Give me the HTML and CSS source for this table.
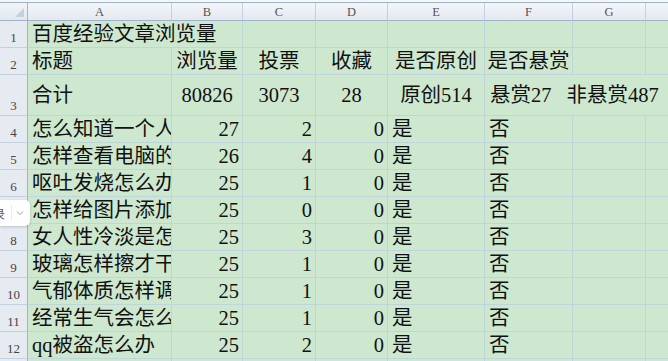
FILE: index.html
```html
<!DOCTYPE html>
<html lang="zh-CN">
<head>
<meta charset="utf-8">
<title>百度经验文章浏览量</title>
<link rel="stylesheet" href="styles.css">
</head>
<body>
<div class="sheet">
  <div class="grid">
    <div class="corner"><span class="tri"></span></div>
    <div class="ch">A</div><div class="ch">B</div><div class="ch">C</div><div class="ch">D</div><div class="ch">E</div><div class="ch">F</div><div class="ch">G</div><div class="ch last"></div>

    <div class="rh">1</div>
    <div class="c l span2">百度经验文章浏览量</div><div class="c"></div><div class="c"></div><div class="c"></div><div class="c"></div><div class="c"></div><div class="c last"></div>

    <div class="rh">2</div>
    <div class="c l">标题</div><div class="c m">浏览量</div><div class="c m">投票</div><div class="c m">收藏</div><div class="c m">是否原创</div><div class="c m">是否悬赏</div><div class="c"></div><div class="c last"></div>

    <div class="rh">3</div>
    <div class="c l mid">合计</div><div class="c m mid">80826</div><div class="c m mid">3073</div><div class="c m mid">28</div><div class="c m mid">原创514</div>
    <div class="c l mid span3 pair"><span>悬赏27</span><span>非悬赏487</span></div>

    <div class="rh">4</div>
    <div class="c l clip">怎么知道一个人</div><div class="c r">27</div><div class="c r">2</div><div class="c r">0</div><div class="c l">是</div><div class="c l">否</div><div class="c"></div><div class="c last"></div>

    <div class="rh">5</div>
    <div class="c l clip">怎样查看电脑的</div><div class="c r">26</div><div class="c r">4</div><div class="c r">0</div><div class="c l">是</div><div class="c l">否</div><div class="c"></div><div class="c last"></div>

    <div class="rh">6</div>
    <div class="c l clip">呕吐发烧怎么办</div><div class="c r">25</div><div class="c r">1</div><div class="c r">0</div><div class="c l">是</div><div class="c l">否</div><div class="c"></div><div class="c last"></div>

    <div class="rh">7</div>
    <div class="c l clip">怎样给图片添加</div><div class="c r">25</div><div class="c r">0</div><div class="c r">0</div><div class="c l">是</div><div class="c l">否</div><div class="c"></div><div class="c last"></div>

    <div class="rh">8</div>
    <div class="c l clip">女人性冷淡是怎</div><div class="c r">25</div><div class="c r">3</div><div class="c r">0</div><div class="c l">是</div><div class="c l">否</div><div class="c"></div><div class="c last"></div>

    <div class="rh">9</div>
    <div class="c l clip">玻璃怎样擦才干</div><div class="c r">25</div><div class="c r">1</div><div class="c r">0</div><div class="c l">是</div><div class="c l">否</div><div class="c"></div><div class="c last"></div>

    <div class="rh">10</div>
    <div class="c l clip">气郁体质怎样调</div><div class="c r">25</div><div class="c r">1</div><div class="c r">0</div><div class="c l">是</div><div class="c l">否</div><div class="c"></div><div class="c last"></div>

    <div class="rh">11</div>
    <div class="c l clip">经常生气会怎么</div><div class="c r">25</div><div class="c r">1</div><div class="c r">0</div><div class="c l">是</div><div class="c l">否</div><div class="c"></div><div class="c last"></div>

    <div class="rh">12</div>
    <div class="c l clip">qq被盗怎么办</div><div class="c r">25</div><div class="c r">2</div><div class="c r">0</div><div class="c l">是</div><div class="c l">否</div><div class="c"></div><div class="c last"></div>

    <div class="rh">13</div>
    <div class="c"></div><div class="c"></div><div class="c"></div><div class="c"></div><div class="c"></div><div class="c"></div><div class="c"></div><div class="c last"></div>
  </div>
  <div class="float"><span class="fl-txt">录</span><span class="fl-sep"></span><svg class="fl-chev" width="8" height="6" viewBox="0 0 8 6"><path d="M1 1.5 L4 4.5 L7 1.5" fill="none" stroke="#9a9a9a" stroke-width="1"/></svg></div>
</div>
</body>
</html>
```

FILE: styles.css
```css
html, body {
  margin: 0;
  padding: 0;
  background: #f4f5f7;
  overflow: hidden;
}

.sheet {
  position: relative;
  width: 668px;
  height: 361px;
  padding-top: 2px;
  box-sizing: border-box;
  overflow: hidden;
}

.grid {
  display: grid;
  grid-template-columns: 28px 144px 71px 73px 72px 97px 88px 73px 1fr;
  grid-template-rows: 18px 27px 27px 41px repeat(9, 27px) 27px;
  border-top: 1px solid #9fb4cb;
  font-family: "Liberation Serif", "Noto Sans CJK SC", serif;
  font-size: 20.5px;
  color: #111;
}

.corner {
  position: relative;
  background: linear-gradient(#f1f4f8, #e2e8ef);
  border-right: 1px solid #9fb4cb;
  border-bottom: 1px solid #9fb4cb;
}
.corner .tri {
  position: absolute;
  right: 3px;
  bottom: 3px;
  width: 0;
  height: 0;
  border-left: 9px solid transparent;
  border-bottom: 9px solid #c4d0de;
}

.ch {
  display: flex;
  align-items: center;
  justify-content: center;
  background: linear-gradient(#f3f6f9, #e4e9f0);
  border-right: 1px solid #c3d0de;
  border-bottom: 1px solid #9fb4cb;
  font-family: "Liberation Serif", serif;
  font-size: 12.5px;
  color: #555;
  padding-top: 1px;
}
.ch.last { border-right: none; }

.rh {
  display: flex;
  align-items: flex-end;
  justify-content: center;
  background: #e6ebf1;
  border-right: 1px solid #9fb4cb;
  border-bottom: 1px solid #c3d0de;
  font-family: "Liberation Serif", serif;
  font-size: 13px;
  color: #444;
  padding-bottom: 1px;
  box-sizing: border-box;
}

.c {
  display: flex;
  align-items: flex-end;
  background: #cde8cf;
  border-right: 1px solid #bfd5dc;
  border-bottom: 1px solid #bfd5dc;
  padding: 0 3px 1px 4px;
  line-height: 24px;
  white-space: nowrap;
  box-sizing: border-box;
  min-width: 0;
}
.c.last { border-right: none; }
.c.l { justify-content: flex-start; }
.c.m { justify-content: center; padding: 0 0 1px 0; }
.c.r { justify-content: flex-end; padding-right: 3px; }
.c.mid { align-items: center; padding-bottom: 0; }
.c.clip { overflow: hidden; padding-right: 0; }
.span2 { grid-column: span 2; }
.span3 { grid-column: span 3; border-right: none; }
.pair { gap: 15px; padding-left: 5px; }

.float {
  position: absolute;
  left: 0;
  top: 200px;
  width: 30px;
  height: 26px;
  background: #fff;
  border-radius: 0 5px 5px 0;
  box-shadow: 0 1px 3px rgba(0,0,0,0.18);
  display: flex;
  align-items: center;
  overflow: hidden;
}
.fl-txt {
  font-family: "Noto Sans CJK SC", sans-serif;
  font-size: 12px;
  color: #555;
  margin-left: -7px;
  width: 12px;
}
.fl-sep {
  width: 1px;
  height: 16px;
  background: #ececec;
  margin-left: 6px;
}
.fl-chev { margin-left: 4px; }
```
